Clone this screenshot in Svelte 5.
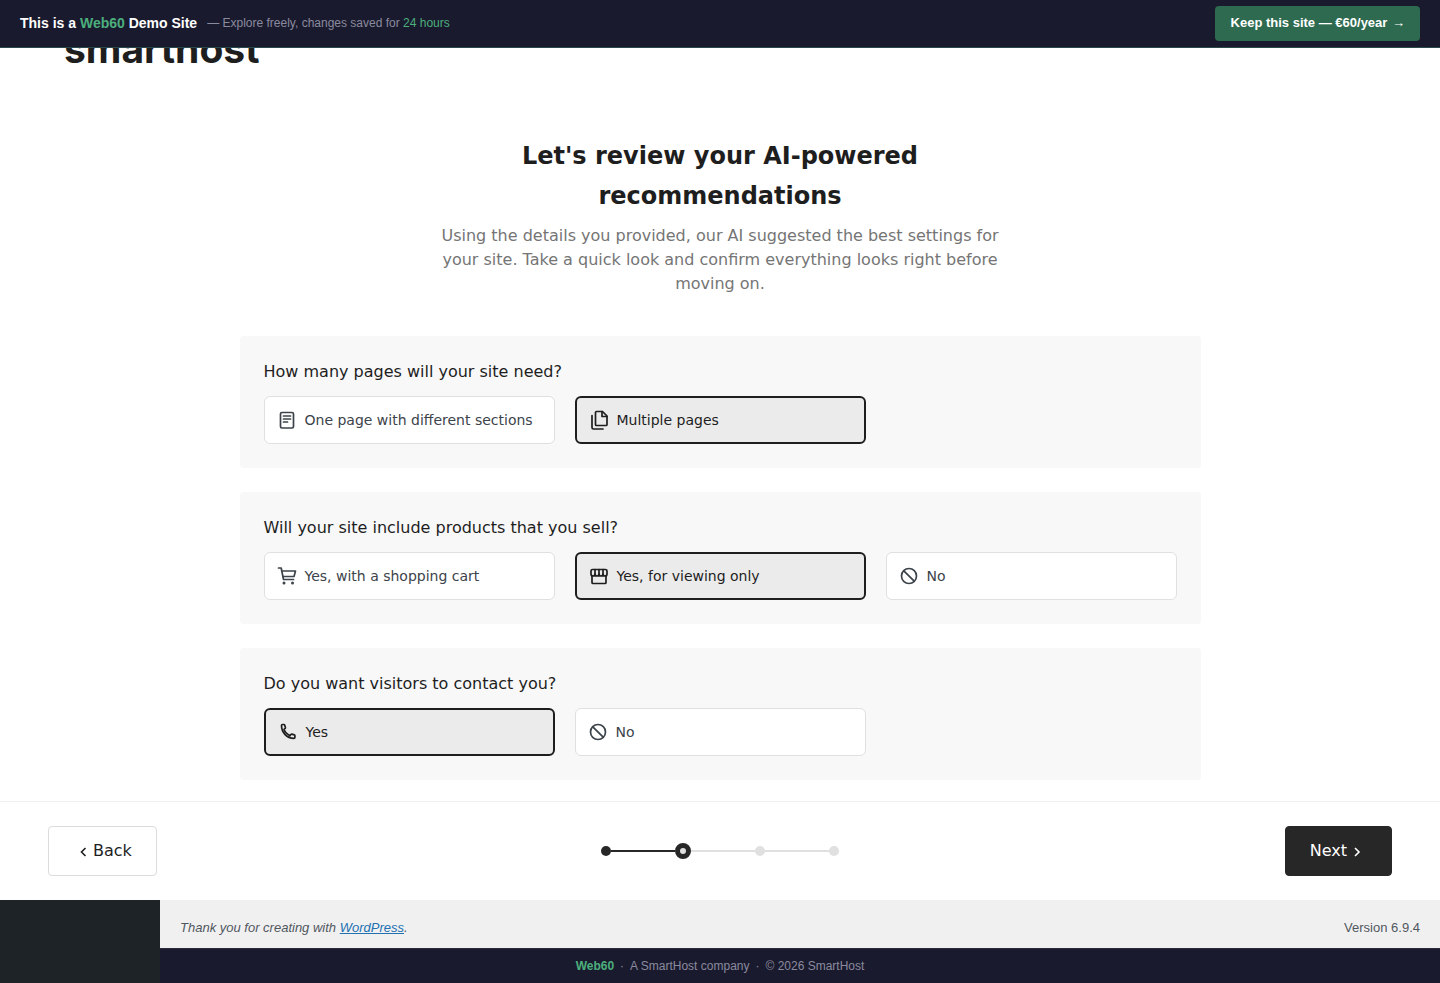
<script lang="ts">
	const sections = [
		{
			question: 'How many pages will your site need?',
			options: [
				{ label: 'One page with different sections', icon: 'page' },
				{ label: 'Multiple pages', icon: 'pages', selected: true },
			],
		},
		{
			question: 'Will your site include products that you sell?',
			options: [
				{ label: 'Yes, with a shopping cart', icon: 'cart' },
				{ label: 'Yes, for viewing only', icon: 'store', selected: true },
				{ label: 'No', icon: 'block' },
			],
		},
		{
			question: 'Do you want visitors to contact you?',
			options: [
				{ label: 'Yes', icon: 'phone', selected: true },
				{ label: 'No', icon: 'block' },
			],
		},
	];
</script>

<div class="topbar">
	<div class="topbar-text">
		<strong>This is a <span class="green">Web60</span> Demo Site</strong>
		<span class="topbar-note">— Explore freely, changes saved for <span class="green">24 hours</span></span>
	</div>
	<button class="keep">Keep this site — €60/year <span class="arrow">→</span></button>
</div>

<div class="page">
	<main class="main">
		<header class="logo">smarthost</header>
		<h1>Let's review your AI-powered<br />recommendations</h1>
		<p class="intro">
			Using the details you provided, our AI suggested the best settings for your site. Take a quick look and confirm everything looks right before moving on.
		</p>
		<div class="cards">
			{#each sections as section}
				<section class="card">
					<h2>{section.question}</h2>
					<div class="options">
						{#each section.options as option}
							<button class="option" class:selected={option.selected}>
								<svg viewBox="0 0 24 24" width="24" height="24" fill="none" stroke="currentColor" stroke-width="1.7" stroke-linejoin="round" stroke-linecap="round">
									{#if option.icon === 'page'}
										<rect x="5.500" y="4.500" width="13" height="15.500" rx="1.500" />
										<path d="M8.500 8h7M8.500 11h7M8.500 14h4" />
									{:else if option.icon === 'pages'}
										<path d="M9.500 3.500h6l4.500 4.500v8.500a1 1 0 0 1-1 1h-9.500a1 1 0 0 1-1-1v-12a1 1 0 0 1 1-1z" />
										<path d="M15 3.500v5h5" />
										<path d="M5 7.500v12a1.500 1.500 0 0 0 1.500 1.500h9.500" />
									{:else if option.icon === 'cart'}
										<path d="M3.500 4h2.700l2.300 11.500h10" />
										<path d="M6.700 7h13.800l-1.500 5.500H7.800" />
										<circle cx="9" cy="19" r="1.500" fill="currentColor" stroke="none" />
										<circle cx="17.500" cy="19" r="1.500" fill="currentColor" stroke="none" />
									{:else if option.icon === 'store'}
										<path d="M5 12v6.500a1 1 0 0 0 1 1h12a1 1 0 0 0 1-1V12" />
										<path d="M5.500 5.500h13a1.500 1.500 0 0 1 1.500 1.500v3a2 2 0 0 1-4 0 2 2 0 0 1-4 0 2 2 0 0 1-4 0 2 2 0 0 1-4 0V7a1.500 1.500 0 0 1 1.500-1.500z" />
										<path d="M8 5.500V10M12 5.500V10M16 5.500V10" />
									{:else if option.icon === 'block'}
										<circle cx="12" cy="12" r="7.500" />
										<path d="M6.800 6.800l10.400 10.400" />
									{:else if option.icon === 'phone'}
										<path d="M5.500 5.500c0-.6.4-1 1-1h1.300c.4 0 .7.2.8.6l.8 2.400c.1.3 0 .6-.2.8L8 9.300c1 2.800 3.200 5.100 6 6.300l1.100-1.300c.2-.2.5-.3.8-.2l2.400.8c.4.1.6.5.6.9v1.500c0 .6-.4 1-1 1C11 18.400 5.500 12.500 5.500 5.500z" />
									{/if}
								</svg>
								<span>{option.label}</span>
							</button>
						{/each}
					</div>
				</section>
			{/each}
		</div>
	</main>

	<nav class="wizard-nav">
		<div class="nav-left">
			<button class="nav-btn back">
				<svg viewBox="0 0 20 20" width="20" height="20" fill="none" stroke="currentColor" stroke-width="1.600"><path d="M12.500 7L8.500 11l4 4" /></svg>
				<span>Back</span>
			</button>
		</div>
		<div class="steps">
			<span class="dot done"></span>
			<span class="line done"></span>
			<span class="dot current"></span>
			<span class="line"></span>
			<span class="dot"></span>
			<span class="line"></span>
			<span class="dot"></span>
		</div>
		<div class="nav-right">
			<button class="nav-btn next">
				<span>Next</span>
				<svg viewBox="0 0 20 20" width="20" height="20" fill="none" stroke="currentColor" stroke-width="1.600"><path d="M8 7l4 4-4 4" /></svg>
			</button>
		</div>
	</nav>

	<div class="admin">
		<aside class="sidebar"></aside>
		<div class="admin-main">
			<div class="wp-footer">
				<em>Thank you for creating with <a href="#top">WordPress</a>.</em>
				<span>Version 6.9.4</span>
			</div>
			<div class="credit">
				<strong class="green">Web60</strong>
				<i>·</i>
				<span>A SmartHost company</span>
				<i>·</i>
				<span>© 2026 SmartHost</span>
			</div>
		</div>
	</div>
</div>

<style>
	:global(body) {
		margin: 0;
		background: #fff;
	}
	button {
		cursor: pointer;
	}
	.topbar {
		position: fixed;
		top: 0;
		left: 0;
		right: 0;
		z-index: 5;
		height: 47px;
		display: flex;
		align-items: center;
		justify-content: space-between;
		padding: 0 20px;
		background: #1a1a2e;
		border-bottom: 1px solid #2d4a4a;
		font-family: "Liberation Sans", Arial, sans-serif;
	}
	.topbar-text {
		display: flex;
		align-items: center;
		gap: 10px;
		margin-top: -2px;
		color: #fff;
	}
	.topbar-text strong {
		font-size: 14px;
	}
	.topbar-note {
		font-size: 12px;
		color: #8a8a9e;
	}
	.green {
		color: #4caf7d;
	}
	.keep {
		height: 35px;
		padding: 0 15px 2px 16px;
		margin-top: -1px;
		border: 0;
		border-radius: 4px;
		background: #2d6a4f;
		color: #fff;
		font: 700 13px/31px "Liberation Sans", Arial, sans-serif;
	}
	.arrow {
		font-weight: 400;
		margin-left: 1px;
	}
	.page {
		height: 983px;
		display: flex;
		flex-direction: column;
		overflow: hidden;
		font-family: "DejaVu Sans", sans-serif;
		color: #1e1e1e;
	}
	.main {
		height: 801px;
		flex: none;
	}
	.logo {
		height: 135px;
		box-sizing: border-box;
		padding: 22px 0 0 64px;
		font: 700 39px/54px Inter, sans-serif;
		color: #1e1e1e;
	}
	h1 {
		margin: 0;
		padding-top: 1px;
		text-align: center;
		font-size: 24px;
		line-height: 40px;
		font-weight: 700;
	}
	.intro {
		width: 580px;
		margin: 8px auto 40px;
		text-align: center;
		font-size: 16px;
		line-height: 24px;
		color: #757575;
	}
	.cards {
		width: 961px;
		margin: 0 auto;
		display: flex;
		flex-direction: column;
		gap: 24px;
	}
	.card {
		height: 132px;
		box-sizing: border-box;
		padding: 24px;
		background: #f8f8f8;
		border-radius: 4px;
	}
	h2 {
		margin: 0 0 12px;
		font-size: 16px;
		line-height: 24px;
		font-weight: 400;
	}
	.options {
		display: grid;
		grid-template-columns: repeat(3, 291px);
		gap: 20px;
	}
	.option {
		height: 48px;
		display: flex;
		align-items: center;
		gap: 6px;
		padding: 0 10px;
		background: #fff;
		border: 1px solid #e0e0e0;
		border-radius: 6px;
		color: #3c434a;
		font: 400 14px "DejaVu Sans", sans-serif;
		text-align: left;
	}
	.option.selected {
		background: #ebebeb;
		border: 2px solid #1e1e1e;
		color: #1e1e1e;
	}
	.wizard-nav {
		height: 99px;
		flex: none;
		box-sizing: border-box;
		padding: 0 48px;
		display: grid;
		grid-template-columns: 1fr auto 1fr;
		align-items: center;
		border-top: 1px solid #f0f0f0;
	}
	.nav-right {
		display: flex;
		justify-content: flex-end;
	}
	.nav-btn {
		height: 50px;
		box-sizing: border-box;
		display: flex;
		align-items: center;
		padding: 0 24px;
		border-radius: 4px;
		font: 400 16px "DejaVu Sans", sans-serif;
	}
	.nav-btn span {
		margin-top: -2px;
	}
	.back {
		background: #fff;
		border: 1px solid #dcdcde;
		color: #1e1e1e;
	}
	.next {
		background: #272727;
		border: 1px solid #272727;
		color: #fff;
	}
	.steps {
		display: flex;
		align-items: center;
	}
	.dot {
		width: 10px;
		height: 10px;
		border-radius: 50%;
		background: #e0e0e0;
	}
	.dot.done {
		background: #272727;
	}
	.dot.current {
		width: 6px;
		height: 6px;
		background: #e0e0e0;
		border: 5px solid #272727;
	}
	.line {
		width: 64px;
		height: 2px;
		background: #e0e0e0;
	}
	.line.done {
		background: #272727;
	}
	.admin {
		flex: 1;
		display: flex;
		font-family: "Liberation Sans", Arial, sans-serif;
	}
	.sidebar {
		width: 160px;
		background: #1d2327;
	}
	.admin-main {
		flex: 1;
		display: flex;
		flex-direction: column;
	}
	.wp-footer {
		height: 48px;
		box-sizing: border-box;
		padding: 7px 20px 0;
		display: flex;
		align-items: center;
		justify-content: space-between;
		background: #f0f0f1;
		font-size: 13px;
		color: #50575e;
	}
	.wp-footer a {
		color: #2271b1;
	}
	.credit {
		flex: 1;
		display: flex;
		align-items: center;
		justify-content: center;
		gap: 6px;
		padding-right: 160px;
		background: #1a1a2e;
		border-top: 1px solid #2a2a3e;
		font-size: 12px;
		color: #8a8a9e;
	}
	.credit i {
		font-style: normal;
	}
</style>
